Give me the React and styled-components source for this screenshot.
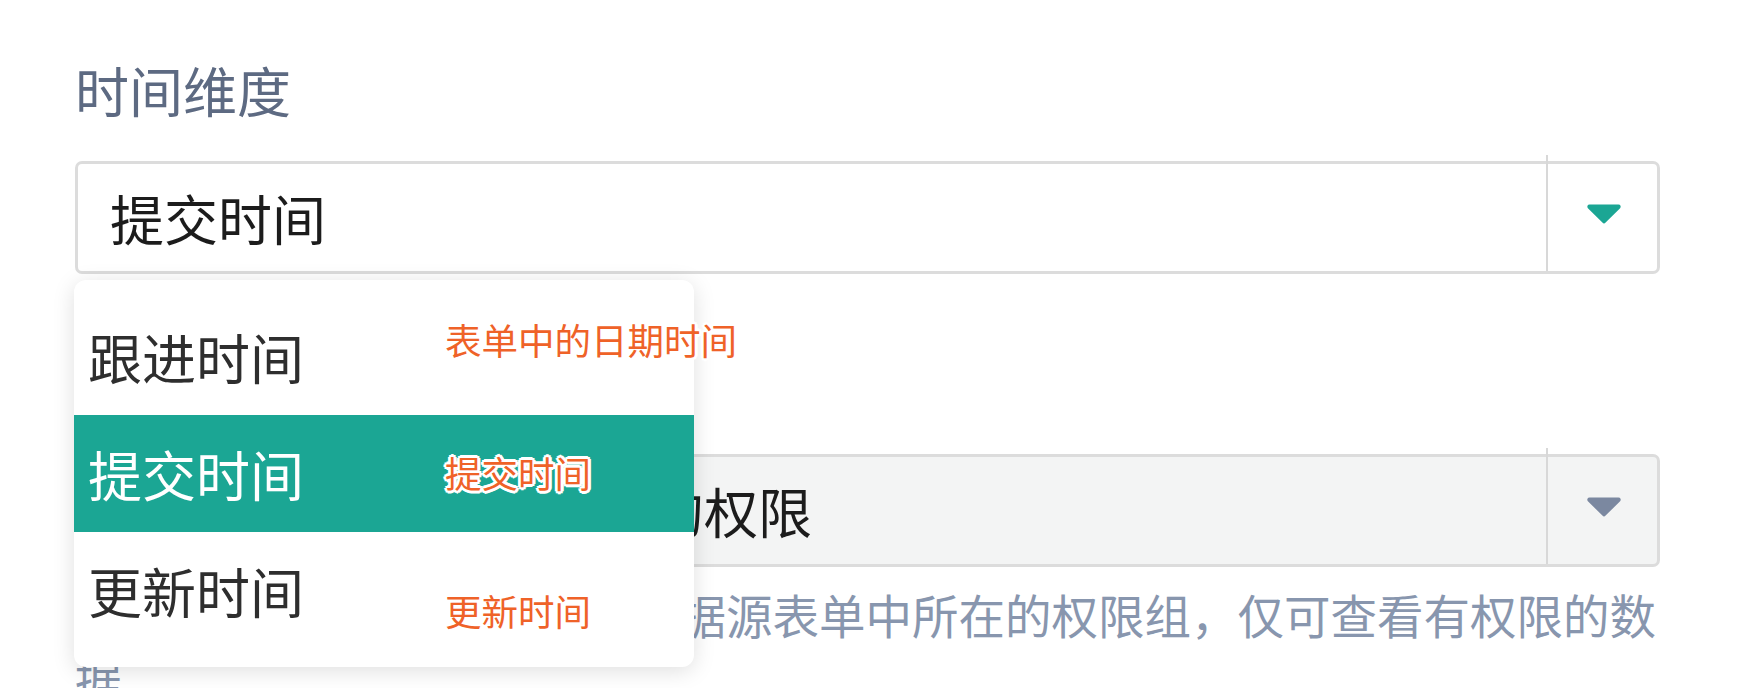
import React from "react";
import styled, { createGlobalStyle } from "styled-components";

const GlobalStyle = createGlobalStyle`
  html, body {
    margin: 0;
    padding: 0;
    background: #ffffff;
  }
  body {
    font-family: "Noto Sans CJK SC", "Noto Sans", sans-serif;
  }
`;

const options = [
  { label: "跟进时间", note: "表单中的日期时间", shift: -17 },
  { label: "提交时间", note: "提交时间", shift: -1 },
  { label: "更新时间", note: "更新时间", shift: 20 }
];

// rounded down caret used by the select boxes
const Caret = ({ color }) => (
  <svg width="36" height="22" viewBox="0 0 36 22">
    <path
      d="M3.5 1.5 H32.5 a2.2 2.2 0 0 1 1.6 3.7 L19.6 19.6 a2.2 2.2 0 0 1 -3.2 0 L1.9 5.2 A2.2 2.2 0 0 1 3.5 1.5 Z"
      fill={color}
    />
  </svg>
);

const Select = ({ value, disabled, caretColor, children }) => (
  <SelectWrap>
    <SelectBox disabled={disabled}>
      <Value>{value}</Value>
      <ArrowCell>
        <Caret color={caretColor} />
      </ArrowCell>
    </SelectBox>
    {children}
  </SelectWrap>
);

const App = () => {
  const selected = "提交时间";

  return (
    <Page>
      <GlobalStyle />
      <Field>
        <Label>时间维度</Label>
        <Select value={selected} caretColor="#1ba694">
          <Menu>
            {options.map(option => (
              <Item key={option.label} active={option.label === selected}>
                <ItemText>{option.label}</ItemText>
                <Note style={{ transform: `translateY(${option.shift}px)` }}>
                  {option.note}
                </Note>
              </Item>
            ))}
          </Menu>
        </Select>
      </Field>

      <Field second>
        <Label>数据权限</Label>
        <Select value="继承数据源表单中成员的权限" disabled caretColor="#7b88a0" />
        <Hint>
          开启后，成员将按其本人在数据源表单中所在的权限组，仅可查看有权限的数据
        </Hint>
      </Field>
    </Page>
  );
};

const Page = styled.div`
  height: 688px;
  box-sizing: border-box;
  overflow: hidden;
  padding: 52px 78px 0 75px;
`;

const Field = styled.div`
  margin-top: ${props => (props.second ? "71px" : "0")};
`;

const Label = styled.div`
  font-size: 54px;
  line-height: 76px;
  color: #5d6a82;
  margin-bottom: 33px;
`;

const SelectWrap = styled.div`
  position: relative;
`;

const SelectBox = styled.div`
  display: flex;
  align-items: stretch;
  height: 113px;
  box-sizing: border-box;
  border: 3px solid #dcdcdc;
  border-radius: 7px;
  background: ${props => (props.disabled ? "#f3f4f4" : "#ffffff")};
`;

const Value = styled.div`
  flex: 1;
  display: flex;
  align-items: center;
  padding-left: 32px;
  font-size: 54px;
  color: #1c1c1c;
  white-space: nowrap;
  overflow: hidden;
`;

const ArrowCell = styled.div`
  position: relative;
  width: 111px;
  display: flex;
  align-items: center;
  justify-content: center;
  padding-bottom: 8px;
  padding-left: 5px;
  box-sizing: border-box;

  &::before {
    content: "";
    position: absolute;
    left: 0;
    top: -9px;
    bottom: 0;
    width: 2px;
    background: #d8d8d8;
  }
`;

const Menu = styled.div`
  position: absolute;
  top: calc(100% + 6px);
  left: -1px;
  width: 620px;
  padding: 18px 0;
  background: #ffffff;
  border-radius: 12px;
  box-shadow: 0 4px 22px rgba(0, 0, 0, 0.13);
  z-index: 2;
`;

const Item = styled.div`
  display: flex;
  align-items: center;
  height: 117px;
  padding-left: 14px;
  background: ${props => (props.active ? "#1ba694" : "transparent")};
  color: ${props => (props.active ? "#ffffff" : "#2e2e2e")};
`;

const ItemText = styled.span`
  font-size: 54px;
  width: 216px;
  flex-shrink: 0;
  white-space: nowrap;
`;

const Note = styled.span`
  margin-left: 141px;
  flex-shrink: 0;
  white-space: nowrap;
  font-size: 36.5px;
  color: #ef6228;
  text-shadow: 3px 0 0 #fff, -3px 0 0 #fff, 0 3px 0 #fff, 0 -3px 0 #fff,
    2px 2px 0 #fff, -2px -2px 0 #fff, 2px -2px 0 #fff, -2px 2px 0 #fff;
`;

const Hint = styled.div`
  margin-top: 15px;
  font-size: 46.5px;
  line-height: 64px;
  color: #8896ae;
`;

export default App;
